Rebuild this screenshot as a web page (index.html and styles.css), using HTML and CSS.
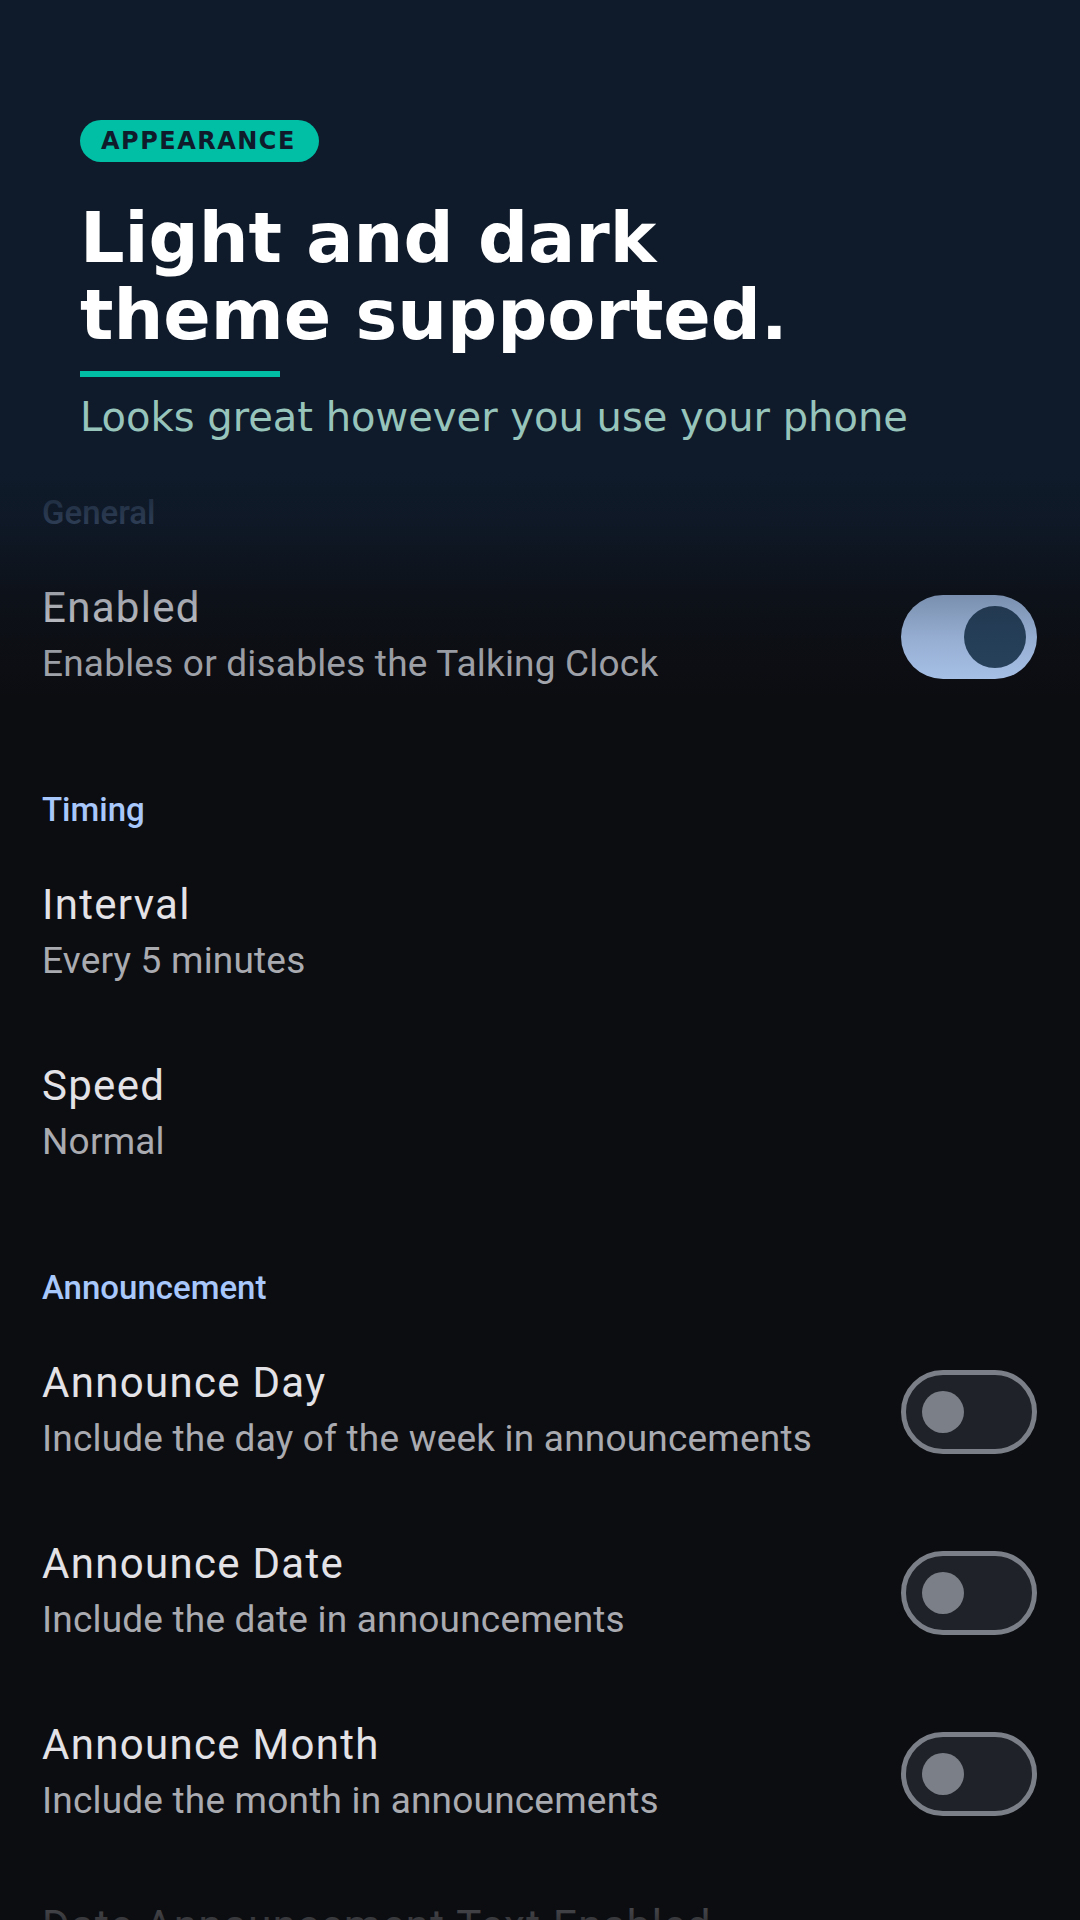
FILE: index.html
```html
<!DOCTYPE html>
<html lang="en">
<head>
<meta charset="utf-8">
<title>Talking Clock settings</title>
<link rel="stylesheet" href="styles.css">
</head>
<body>
<div class="screen">
  <main class="settings">
    <section class="category">
      <h2 class="category-title">General</h2>
      <div class="pref">
        <div class="pref-text">
          <div class="pref-title">Enabled</div>
          <div class="pref-summary">Enables or disables the Talking Clock</div>
        </div>
        <div class="switch on"><span class="thumb"></span></div>
      </div>
    </section>
    <section class="category">
      <h2 class="category-title">Timing</h2>
      <div class="pref">
        <div class="pref-text">
          <div class="pref-title">Interval</div>
          <div class="pref-summary">Every 5 minutes</div>
        </div>
      </div>
      <div class="pref">
        <div class="pref-text">
          <div class="pref-title">Speed</div>
          <div class="pref-summary">Normal</div>
        </div>
      </div>
    </section>
    <section class="category">
      <h2 class="category-title">Announcement</h2>
      <div class="pref">
        <div class="pref-text">
          <div class="pref-title">Announce Day</div>
          <div class="pref-summary">Include the day of the week in announcements</div>
        </div>
        <div class="switch"><span class="thumb"></span></div>
      </div>
      <div class="pref">
        <div class="pref-text">
          <div class="pref-title">Announce Date</div>
          <div class="pref-summary">Include the date in announcements</div>
        </div>
        <div class="switch"><span class="thumb"></span></div>
      </div>
      <div class="pref">
        <div class="pref-text">
          <div class="pref-title">Announce Month</div>
          <div class="pref-summary">Include the month in announcements</div>
        </div>
        <div class="switch"><span class="thumb"></span></div>
      </div>
      <div class="pref">
        <div class="pref-text">
          <div class="pref-title">Date Announcement Text Enabled</div>
        </div>
      </div>
    </section>
  </main>

  <header class="hero">
    <span class="badge">APPEARANCE</span>
    <h1 class="hero-title">Light and dark<br>theme supported.</h1>
    <div class="hero-bar"></div>
    <p class="hero-sub">Looks great however you use your phone</p>
  </header>
  <div class="bottom-fade"></div>
</div>
</body>
</html>
```

FILE: styles.css
```css
* { box-sizing: border-box; }

html, body {
  margin: 0;
  padding: 0;
  background: #0c0d11;
}

.screen {
  position: relative;
  width: 1080px;
  height: 1920px;
  overflow: hidden;
  background: #0c0d11;
  font-family: Roboto, "Noto Sans", sans-serif;
}

/* ---------- settings list ---------- */
.settings {
  padding-top: 427px;
}

.category-title {
  margin: 0;
  padding: 63px 42px 8px;
  font-family: Roboto, sans-serif;
  font-weight: 500;
  font-size: 33px;
  line-height: 45px;
  letter-spacing: 0;
  color: #a8c7fa;
}

.pref {
  display: flex;
  align-items: center;
  gap: 40px;
  padding: 35px 43px 34px 42px;
}

.pref-text {
  flex: 1;
  min-width: 0;
}

.pref-title {
  font-size: 42px;
  line-height: 60px;
  letter-spacing: 1.3px;
  color: #e3e2e6;
  white-space: nowrap;
}

.pref-summary {
  font-size: 37px;
  line-height: 52px;
  letter-spacing: 0.2px;
  color: #a9abb1;
  white-space: nowrap;
}

/* ---------- switches ---------- */
.switch {
  flex: none;
  display: flex;
  align-items: center;
  width: 136px;
  height: 84px;
  margin-top: 6px;
  border-radius: 42px;
  border: 5px solid #7b7f87;
  background: #1f2228;
  padding-left: 16px;
}

.switch .thumb {
  width: 42px;
  height: 42px;
  border-radius: 50%;
  background: #7b7f87;
}

.switch.on {
  border: none;
  background: #adc7ee;
  justify-content: flex-end;
  padding: 0 11px 0 0;
}

.switch.on .thumb {
  width: 62px;
  height: 62px;
  background: #29445f;
}

/* ---------- hero overlay ---------- */
.hero {
  position: absolute;
  top: 0;
  left: 0;
  right: 0;
  height: 720px;
  padding: 120px 80px 0;
  background: linear-gradient(to bottom,
    #0f1b2b 0,
    #0f1b2b 465px,
    rgba(15, 27, 43, 0.8) 525px,
    rgba(15, 27, 43, 0.32) 595px,
    rgba(15, 27, 43, 0.14) 640px,
    rgba(15, 27, 43, 0) 700px);
  font-family: "DejaVu Sans", sans-serif;
}

.badge {
  display: inline-block;
  height: 42px;
  line-height: 42px;
  padding: 0 23px 0 21px;
  border-radius: 21px;
  background: #00bfa5;
  color: #0f1b2b;
  font-weight: 700;
  font-size: 24px;
  letter-spacing: 1.5px;
}

.hero-title {
  margin: 38px 0 0;
  font-weight: 700;
  font-size: 70px;
  line-height: 77px;
  color: #ffffff;
}

.hero-bar {
  width: 200px;
  height: 6px;
  margin-top: 17px;
  background: #00bfa5;
}

.hero-sub {
  margin: 14px 0 0;
  font-size: 40px;
  line-height: 52px;
  color: #97c4bb;
}

.bottom-fade {
  position: absolute;
  left: 0;
  right: 0;
  bottom: 0;
  height: 90px;
  background: linear-gradient(to bottom,
    rgba(12, 13, 17, 0) 0,
    rgba(12, 13, 17, 0.72) 75px,
    rgba(12, 13, 17, 0.8) 90px);
}
```
